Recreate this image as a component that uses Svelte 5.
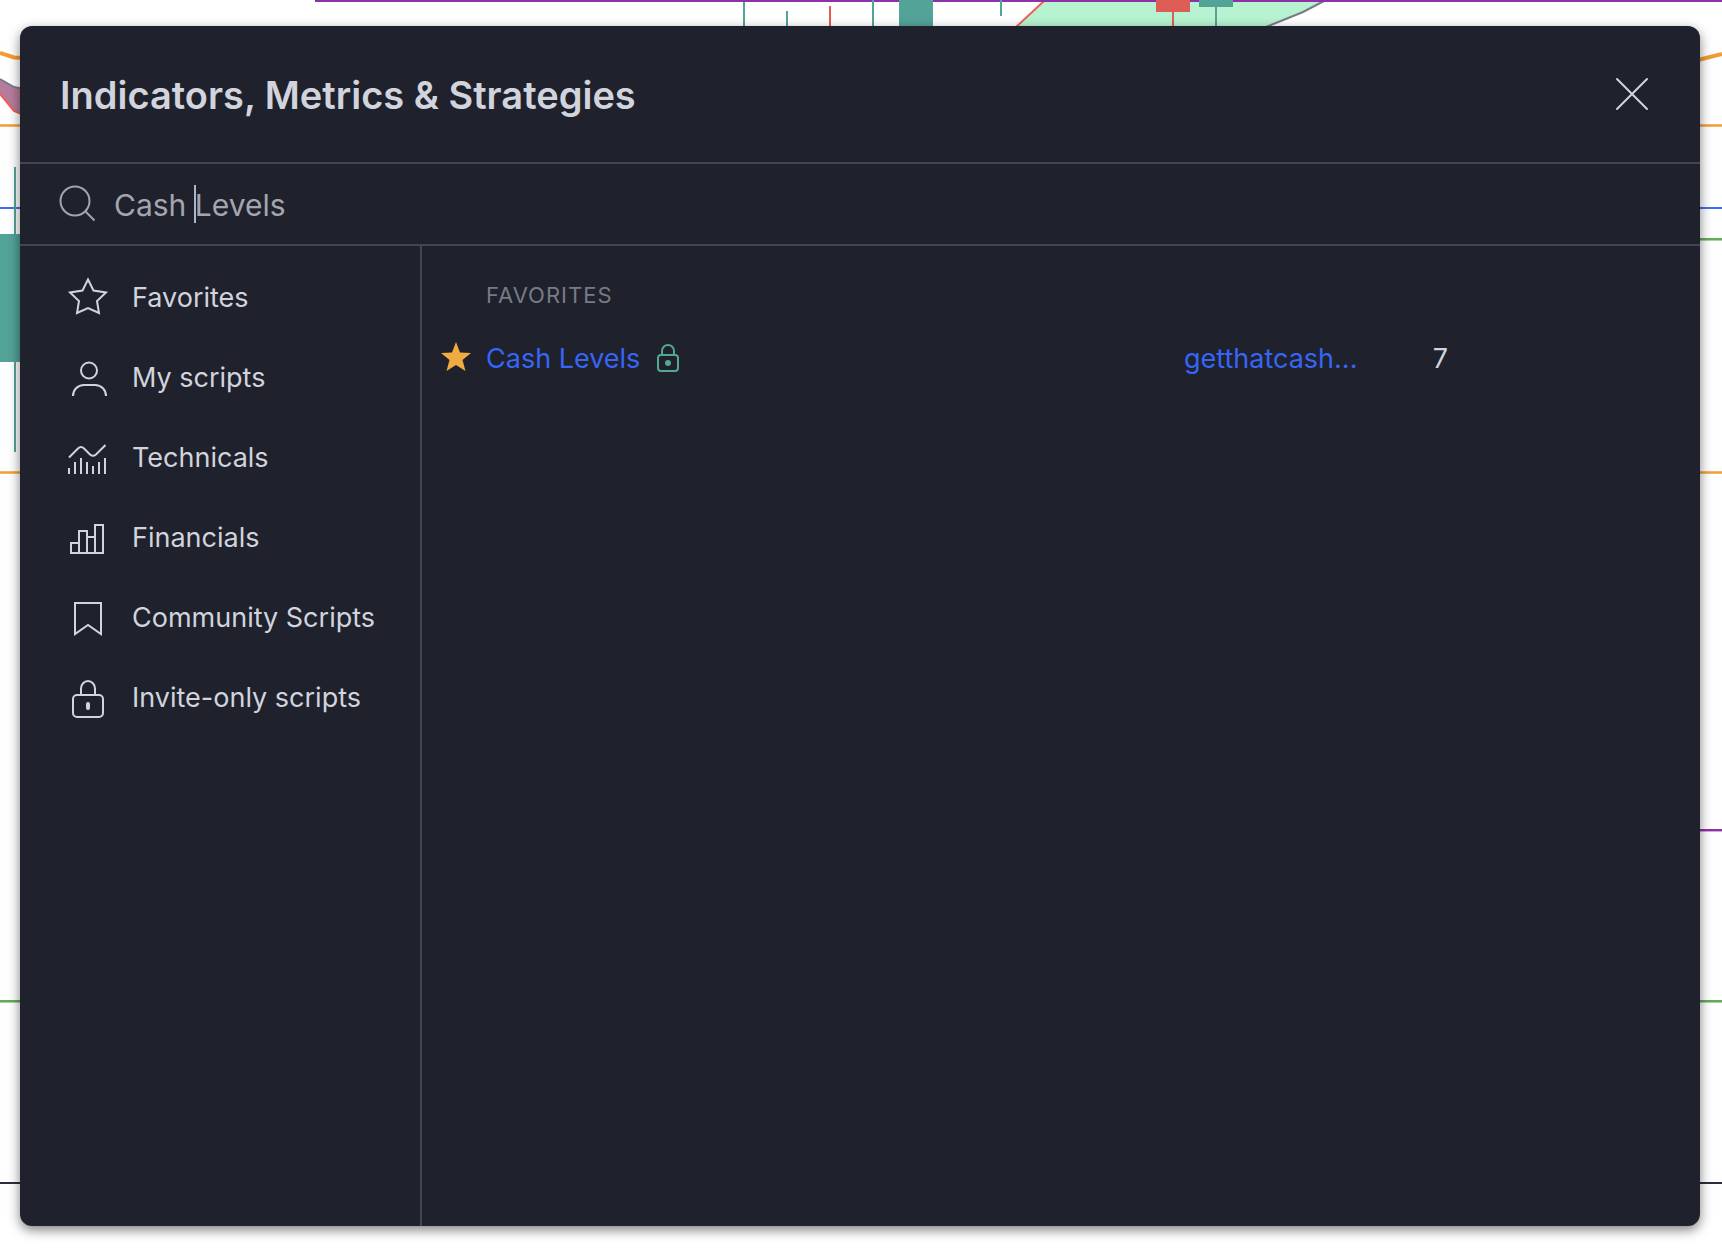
<script>
  const categories = [
    { id: 'favorites', label: 'Favorites' },
    { id: 'mine', label: 'My scripts' },
    { id: 'technicals', label: 'Technicals' },
    { id: 'financials', label: 'Financials' },
    { id: 'community', label: 'Community Scripts' },
    { id: 'invite', label: 'Invite-only scripts' }
  ];
  const results = [{ name: 'Cash Levels', author: 'getthatcash...', likes: 7 }];
  let query = $state('Cash Levels');
</script>

<main class="page">
  <svg class="chart" viewBox="0 0 1722 1252" preserveAspectRatio="none" aria-hidden="true">
    <path d="M1044 1L1016 27H1266L1303 12L1324 1Z" fill="#b8f3d1" />
    <path d="M1044 1L1016 27" stroke="#ec5f59" stroke-width="2" />
    <path d="M1324 1L1303 12L1266 27" fill="none" stroke="#787b86" stroke-width="2" />
    <path d="M0 79L14 87L24 89V114L16 112L0 94Z" fill="#b57d9d" />
    <path d="M0 79L14 87L24 89" fill="none" stroke="#787b86" stroke-width="2" />
    <path d="M0 94L14 111L24 115" fill="none" stroke="#f25a55" stroke-width="2" />
    <path d="M0 53L14 57.500L24 58M1698 60L1722 54" fill="none" stroke="#f39c35" stroke-width="4" />
    <path d="M0 125.500H1722M0 472.500H1722" stroke="#f5b565" stroke-width="3" />
    <path d="M0 125.500H1722M0 472.500H1722" stroke="#f0a03c" stroke-width="1" />
    <path d="M0 208H1722" stroke="#3f6df5" stroke-width="2" />
    <path d="M1690 240.500H1722M0 1002.500H1722" stroke="#a9d3a2" stroke-width="1" />
    <path d="M1690 239H1722M0 1001H1722" stroke="#66ab5b" stroke-width="2" />
    <path d="M1690 831.500H1722" stroke="#d3a9dd" stroke-width="1" />
    <path d="M315 1H1722M1690 830H1722" stroke="#8e30a8" stroke-width="2" />
    <path d="M0 1183H1722" stroke="#2a2e39" stroke-width="2" />
    <g fill="#53a399">
      <path d="M14 167h2v285h-2zM0 234h24v128H0z" />
      <path d="M743 2h2v26h-2zM786 11h2v17h-2zM872 0h2v28h-2zM899 0h34v28h-34zM1000 0h2v16h-2zM1199 0h34v7h-34zM1215 7h2v21h-2z" />
    </g>
    <path d="M829 6h2v22h-2zM1156 0h34v12h-34zM1172 12h2v16h-2z" fill="#de5d57" />
  </svg>

  <div class="dialog" role="dialog" aria-labelledby="dialog-title">
    <header class="header">
      <h1 id="dialog-title">Indicators, Metrics &amp; Strategies</h1>
      <button class="close" type="button" aria-label="Close">
        <svg width="36" height="36" viewBox="0 0 36 36"><path d="M3 3L33 33M33 3L3 33" /></svg>
      </button>
    </header>

    <div class="search">
      <svg width="40" height="40" viewBox="0 0 40 40" aria-hidden="true">
        <circle cx="17" cy="17" r="14.500" />
        <path d="M27.500 27.500L36.500 36.500" />
      </svg>
      <div class="field">
        <input type="text" aria-label="Search" bind:value={query} />
        <span class="caret"></span>
      </div>
    </div>

    <div class="body">
      <nav class="sidebar">
        {#each categories as category (category.id)}
          <button class="category" type="button">
            <svg width="56" height="56" viewBox="0 0 56 56" aria-hidden="true">
              {#if category.id === 'favorites'}
                <path d="M28 9.500L33.500 20.500L46 22.500L37 31L39 43L28 38L17 43L19 31L10 22.500L22.500 20.500Z" />
              {:else if category.id === 'mine'}
                <circle cx="29" cy="20.500" r="8" />
                <path d="M13 46c0-6 4.500-11 11-11h11c6.500 0 11 5 11 11" />
              {:else if category.id === 'technicals'}
                <path d="M9 27.500L18 18.500q3-3 6 0L30 24.500q3 2.500 6 0L45.500 15" />
                <path d="M9 38v6M15 32v12M21 28v16M27 32v12M33 36v8M39 32v12M45 28v16" />
              {:else if category.id === 'financials'}
                <path d="M11 43V33h8V21h8v6h8V15h8v28zM19 33v10M27 27v16M35 27v16" />
              {:else if category.id === 'community'}
                <path d="M15 13h26v31L28 35L15 44z" />
              {:else}
                <rect x="13" y="25" width="30" height="22" rx="4" />
                <path d="M21 25v-6.500a7 7.500 0 0 1 14 0V25" />
                <rect class="solid" x="26" y="32" width="4" height="8" rx="2" />
              {/if}
            </svg>
            <span>{category.label}</span>
          </button>
        {/each}
      </nav>

      <section class="results">
        <h2>Favorites</h2>
        <ul>
          {#each results as item (item.name)}
            <li>
              <button class="star" type="button" aria-label="Remove from favorites">
                <svg width="30" height="30" viewBox="0 0 30 30">
                  <path d="M15 0L19 10.500L30 11L21.500 18L24.500 29L15 23L5.500 29L8.500 18L0 11L11 10.500Z" />
                </svg>
              </button>
              <div class="name">
                <a href="#script">{item.name}</a>
                <svg width="24" height="30" viewBox="0 0 24 30" aria-hidden="true">
                  <rect x="2" y="11" width="20" height="16" rx="3" />
                  <path d="M6 11V7a6 6 0 0 1 12 0V11" />
                  <circle cx="12" cy="19" r="3" />
                </svg>
              </div>
              <a class="author" href="#author">{item.author}</a>
              <span class="likes">{item.likes}</span>
            </li>
          {/each}
        </ul>
      </section>
    </div>
  </div>
</main>

<style>
  :global(body) {
    margin: 0;
    background: #fff;
  }
  .page {
    position: relative;
    display: flex;
    box-sizing: border-box;
    min-height: 100vh;
    padding: 26px 22px 26px 20px;
    font-family: Inter, 'Liberation Sans', sans-serif;
    color: #d1d4dc;
  }
  .chart {
    position: absolute;
    inset: 0;
    width: 100%;
    height: 100%;
  }
  .dialog {
    position: relative;
    display: flex;
    flex: 1;
    flex-direction: column;
    min-width: 0;
    border-radius: 12px;
    background: #1f212c;
    box-shadow: 0 4px 12px rgba(0, 0, 0, 0.5);
  }
  button {
    padding: 0;
    border: 0;
    background: none;
    color: inherit;
    font: inherit;
    cursor: pointer;
  }
  svg {
    flex: none;
    display: block;
  }
  .header {
    display: flex;
    align-items: center;
    justify-content: space-between;
    height: 136px;
    padding: 0 50px 0 40px;
    border-bottom: 2px solid #434651;
  }
  h1 {
    margin: 0;
    padding-top: 2px;
    font-size: 38px;
    font-weight: 600;
    line-height: 48px;
  }
  .close svg {
    fill: none;
    stroke: #d1d4dc;
    stroke-width: 2;
    stroke-linecap: round;
  }
  .search {
    display: flex;
    align-items: center;
    gap: 16px;
    height: 80px;
    padding: 0 40px 0 38px;
    border-bottom: 2px solid #434651;
  }
  .search svg {
    fill: none;
    stroke: #a3a6af;
    stroke-width: 2;
  }
  .field {
    position: relative;
    flex: 1;
  }
  input {
    display: block;
    box-sizing: border-box;
    width: 100%;
    padding: 2px 0 0;
    border: 0;
    outline: 0;
    background: none;
    color: #a3a6af;
    font: inherit;
    font-size: 30px;
    line-height: 40px;
  }
  .caret {
    position: absolute;
    top: 2px;
    left: 80px;
    width: 2px;
    height: 38px;
    background: #b2b5be;
  }
  .body {
    display: flex;
    flex: 1;
  }
  .sidebar {
    box-sizing: border-box;
    width: 402px;
    padding-top: 12px;
    border-right: 2px solid #434651;
  }
  .category {
    display: flex;
    align-items: center;
    gap: 16px;
    width: 100%;
    height: 80px;
    padding-left: 40px;
    font-size: 27px;
    line-height: 36px;
    white-space: nowrap;
  }
  .category svg {
    fill: none;
    stroke: #d1d4dc;
    stroke-width: 2;
  }
  .category .solid {
    fill: #d1d4dc;
    stroke: none;
  }
  .results {
    flex: 1;
    min-width: 0;
    padding-top: 37px;
  }
  h2 {
    margin: 0;
    padding-left: 64px;
    color: #787b86;
    font-size: 22px;
    font-weight: 400;
    line-height: 24px;
    letter-spacing: 1px;
    text-transform: uppercase;
  }
  ul {
    margin: 0;
    padding: 20px 252px 0 0;
    list-style: none;
  }
  li {
    display: grid;
    grid-template-columns: 64px 1fr 176px 88px;
    align-items: center;
    height: 64px;
    font-size: 27px;
    line-height: 36px;
  }
  .star {
    justify-self: start;
    padding: 0 0 4px 19px;
  }
  .star svg {
    fill: #f0ab43;
  }
  .name {
    display: flex;
    align-items: center;
    gap: 16px;
  }
  .name svg {
    fill: none;
    stroke: #53a990;
    stroke-width: 2;
  }
  .name circle {
    fill: #53a990;
    stroke: none;
  }
  a {
    color: #3765f5;
    text-decoration: none;
  }
  .likes {
    text-align: right;
  }
</style>
